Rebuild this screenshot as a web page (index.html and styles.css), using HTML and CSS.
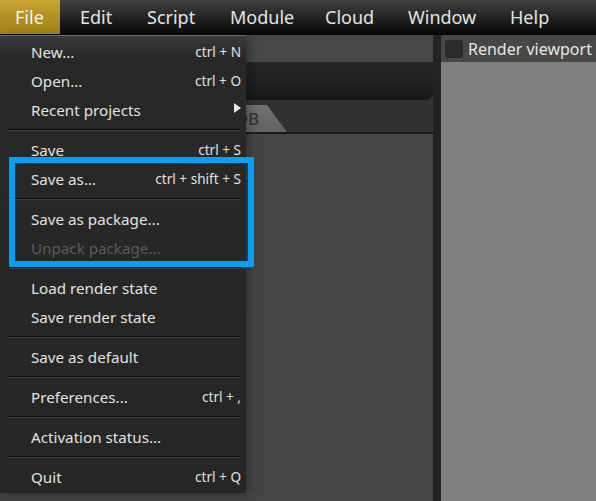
FILE: index.html
```html
<!DOCTYPE html>
<html>
<head>
<meta charset="utf-8">
<link rel="stylesheet" href="styles.css">
</head>
<body>
<div class="app">
  <nav class="menubar">
    <span class="mb-item mb-file active">File</span>
    <span class="mb-item mb-edit">Edit</span>
    <span class="mb-item mb-script">Script</span>
    <span class="mb-item mb-module">Module</span>
    <span class="mb-item mb-cloud">Cloud</span>
    <span class="mb-item mb-window">Window</span>
    <span class="mb-item mb-help">Help</span>
  </nav>
  <div class="workspace">
    <section class="left">
      <div class="strip"></div>
      <div class="toolbox"></div>
      <div class="tabs"><div class="tab">JOB</div></div>
      <div class="panel"></div>
    </section>
    <div class="divider"></div>
    <section class="right">
      <div class="rstrip"><span class="check"></span><span class="rlabel">Render viewport</span></div>
      <div class="viewport"></div>
    </section>
  </div>

  <div class="dropdown">
    <div class="item"><span>New...</span><span class="key">ctrl + N</span></div>
    <div class="item"><span>Open...</span><span class="key">ctrl + O</span></div>
    <div class="item"><span>Recent projects</span><span class="arrow"></span></div>
    <div class="sep"></div>
    <div class="item"><span>Save</span><span class="key">ctrl + S</span></div>
    <div class="item"><span>Save as...</span><span class="key">ctrl + shift + S</span></div>
    <div class="sep"></div>
    <div class="item"><span>Save as package...</span></div>
    <div class="item disabled"><span>Unpack package...</span></div>
    <div class="sep"></div>
    <div class="item"><span>Load render state</span></div>
    <div class="item"><span>Save render state</span></div>
    <div class="sep"></div>
    <div class="item"><span>Save as default</span></div>
    <div class="sep"></div>
    <div class="item"><span>Preferences...</span><span class="key">ctrl + ,</span></div>
    <div class="sep"></div>
    <div class="item"><span>Activation status...</span></div>
    <div class="sep"></div>
    <div class="item"><span>Quit</span><span class="key">ctrl + Q</span></div>
  </div>

  <div class="highlight-box"></div>
</div>
</body>
</html>
```

FILE: styles.css
```css
* { box-sizing: border-box; }
html, body {
  margin: 0;
  padding: 0;
  width: 596px;
  height: 501px;
  overflow: hidden;
  background: #333;
  font-family: "Noto Sans", "Open Sans", sans-serif;
}
.app {
  position: relative;
  width: 596px;
  height: 501px;
  display: flex;
  flex-direction: column;
}

/* menu bar */
.menubar {
  height: 35px;
  flex: none;
  display: flex;
  align-items: stretch;
  background: linear-gradient(#414141, #262626 45%, #121212 80%, #070707);
}
.mb-item {
  display: flex;
  align-items: center;
  color: #e4e4e4;
  font-size: 18px;
  padding: 0 0 1px 0;
  white-space: nowrap;
}
.mb-file { width: 60px; padding-left: 15px; }
.mb-edit { margin-left: 20px; width: 67px; }
.mb-script { width: 83px; }
.mb-module { width: 95px; }
.mb-cloud { width: 83px; }
.mb-window { width: 102px; }
.mb-help { width: 60px; }
.mb-item.active {
  background: linear-gradient(#caa633, #b08e1f 55%, #a48318);
  color: #f2f2f2;
  height: 34px;
}

/* workspace */
.workspace {
  flex: 1;
  display: grid;
  grid-template-columns: 433px 8px 1fr;
  min-height: 0;
}
.left {
  display: flex;
  flex-direction: column;
  background: #333;
}
.strip {
  height: 27px;
  background: #474747;
}
.toolbox {
  height: 38px;
  background: linear-gradient(#262626, #1f1f1f 60%, #161616);
  border-radius: 0 0 7px 7px;
}
.tabs {
  height: 34px;
  padding-top: 5px;
  background: #323232;
  border-bottom: 2px solid #1c1c1c;
}
.tab {
  margin-left: 200px;
  width: 87px;
  height: 27px;
  background: linear-gradient(#717171, #626262);
  clip-path: polygon(0 0, 77% 0, 100% 100%, 0 100%);
  color: #303030;
  font-size: 17px;
  display: flex;
  align-items: center;
  justify-content: flex-end;
  padding-right: 28px;
}
.panel {
  flex: 1;
  background: #454545;
}
.divider {
  background: #232323;
}
.right {
  display: flex;
  flex-direction: column;
  background: #808080;
}
.rstrip {
  height: 27px;
  background: #474747;
  display: flex;
  align-items: center;
  padding-left: 4px;
  gap: 5px;
}
.check {
  width: 18px;
  height: 18px;
  border-radius: 3px;
  background: #2b2b2b;
  flex: none;
}
.rlabel {
  color: #e6e6e6;
  font-size: 16px;
  white-space: nowrap;
}
.viewport {
  flex: 1;
  background: #808080;
}

/* dropdown menu (overlay) */
.dropdown {
  position: absolute;
  left: 0;
  top: 35px;
  width: 246px;
  height: 458px;
  padding-top: 2px;
  border-top: 1px solid #6a6a6a;
  background: linear-gradient(#3a3a3a, #282828 22px, #262626);
  box-shadow: 3px 2px 10px rgba(0, 0, 0, 0.3);
}
.item {
  height: 29px;
  display: flex;
  align-items: center;
  justify-content: space-between;
  padding: 0 5px 2px 31px;
  color: #e2e2e2;
  font-size: 15.2px;
  white-space: nowrap;
}
.item.disabled { color: #5b5b5b; }
.key {
  font-size: 13.6px;
  color: #e0e0e0;
}
.arrow {
  width: 0;
  height: 0;
  border-top: 5px solid transparent;
  border-bottom: 5px solid transparent;
  border-left: 7px solid #e8e8e8;
  margin-top: -4px;
}
.sep {
  height: 11px;
  margin: 0 6px 0 7px;
  padding-top: 4px;
}
.sep::before {
  content: "";
  display: block;
  height: 1px;
  background: #0d0d0d;
}
.sep::after {
  content: "";
  display: block;
  height: 1px;
  background: #3e3e3e;
}

/* annotation box (overlay) */
.highlight-box {
  position: absolute;
  left: 9px;
  top: 157px;
  width: 245px;
  height: 110px;
  border: 6px solid #02a0f7;
}
```
